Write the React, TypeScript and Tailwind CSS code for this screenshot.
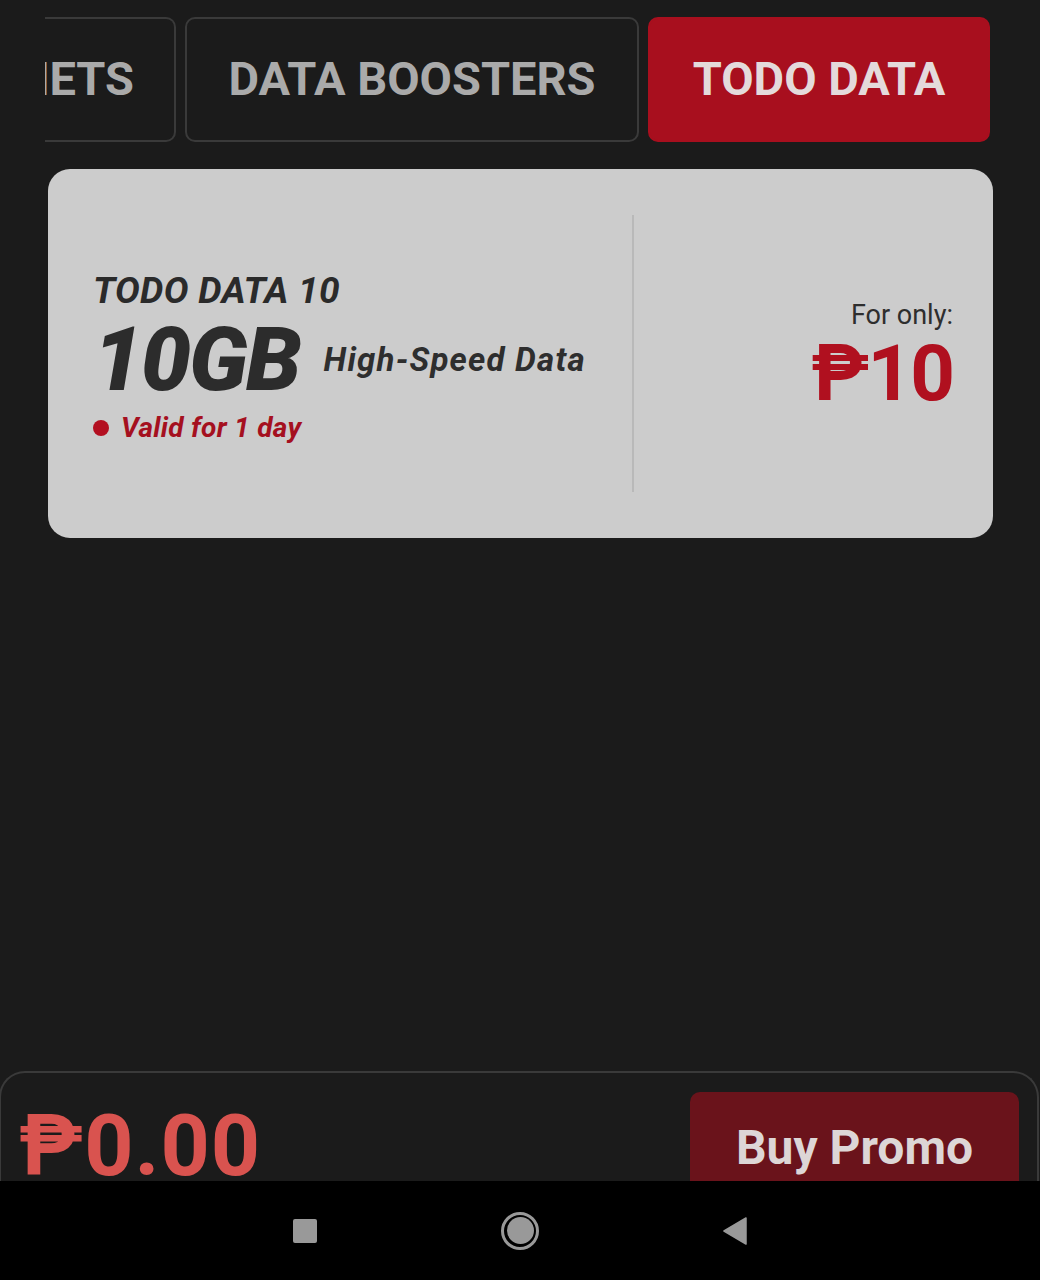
import { useState } from 'react';

const tabs = ['ALL NETS', 'DATA BOOSTERS', 'TODO DATA'];

function NavBar() {
  return (
    <div className="h-[99px] bg-black flex items-center justify-center gap-[184px] shrink-0">
      <div className="w-6 h-6 bg-[#999999] rounded-[2px]" />
      <div className="w-[38px] h-[38px] rounded-full border-[3px] border-[#999999] flex items-center justify-center">
        <div className="w-[27px] h-[27px] rounded-full bg-[#999999]" />
      </div>
      <svg width="24" height="28" viewBox="0 0 24 28" className="text-[#999999]">
        <path d="M23 1 L1 14 L23 27 Z" fill="currentColor" stroke="currentColor" strokeWidth="1.5" strokeLinejoin="round" />
      </svg>
    </div>
  );
}

export default function App() {
  const [active, setActive] = useState(2);

  return (
    <div className="w-[1040px] h-[1280px] bg-[#1b1b1b] flex flex-col overflow-hidden font-['Roboto','Noto_Sans',sans-serif]">
      <div className="flex-1 min-h-0">
        {/* Tabs row, scrolled so the first tab is clipped at the left */}
        <div className="flex gap-[9px] pl-[45px] pr-[50px] pt-[17px] h-[142px]">
          <button
            onClick={() => setActive(0)}
            className="w-[131px] h-[125px] shrink-0 overflow-hidden flex items-center justify-end pr-[40px] border-2 border-l-0 border-[#3a3a3a] rounded-r-[10px] text-[#aaaaaa] text-[47px] font-bold whitespace-nowrap"
          >
            {tabs[0]}
          </button>
          {tabs.slice(1).map((t, i) => (
            <button
              key={t}
              onClick={() => setActive(i + 1)}
              className={`h-[125px] flex items-center justify-center rounded-[10px] text-[47px] font-bold whitespace-nowrap ${
                active === i + 1
                  ? 'flex-1 bg-[#a80f1e] text-[#e4dadb] border-2 border-[#a80f1e]'
                  : 'w-[454px] border-2 border-[#3a3a3a] text-[#aaaaaa]'
              }`}
            >
              {t}
            </button>
          ))}
        </div>

        {/* Promo card */}
        <div className="ml-[48px] mr-[47px] mt-[27px] h-[369px] bg-[#cccccc] rounded-[22px] flex items-center">
          <div className="w-[584px] pl-[45px] italic pt-[6px]">
            <div className="text-[37px] leading-none font-bold text-[#2a2a2a] tracking-[0.3px]">TODO DATA 10</div>
            <div className="flex items-end mt-[6px]">
              <span className="text-[89px] leading-none font-black text-[#2c2c2c] tracking-[-2px]">10GB</span>
              <span className="ml-[24px] mb-[28px] text-[33px] leading-none font-bold text-[#2e2e2e] tracking-[1.2px]">High-Speed Data</span>
            </div>
            <div className="flex items-center mt-[10px] text-[#a5101f]">
              <span className="w-[16px] h-[16px] rounded-full bg-[#b30f20] mr-[12px]" />
              <span className="text-[28px] leading-none font-bold tracking-[0.3px]">Valid for 1 day</span>
            </div>
          </div>
          <div className="w-[2px] h-[277px] bg-[#b9b9b9]" />
          <div className="flex-1 flex flex-col items-end pr-[40px] pt-[8px]">
            <div className="text-[27px] leading-none text-[#2e2e2e]">For only:</div>
            <div className="text-[78px] leading-none font-bold text-[#b0101f] tracking-[-2px] mt-[6px]">₱10</div>
          </div>
        </div>
      </div>

      {/* Bottom checkout bar */}
      <div className="h-[110px] shrink-0 overflow-hidden border-t-2 border-x-2 border-[#3a3a3a] rounded-t-[26px] -mx-[1px] mr-[1px] flex items-start justify-between pl-[18px] pr-[18px]">
        <div className="text-[86px] leading-none font-bold text-[#d9534f] mt-[30px] tracking-[1px]">₱0.00</div>
        <button className="mt-[19px] w-[329px] h-[112px] shrink-0 rounded-[10px] bg-[#6a131b] flex justify-center pt-[32px] text-[48px] leading-none font-bold text-[#ddd6d6]">
          Buy Promo
        </button>
      </div>

      <NavBar />
    </div>
  );
}
